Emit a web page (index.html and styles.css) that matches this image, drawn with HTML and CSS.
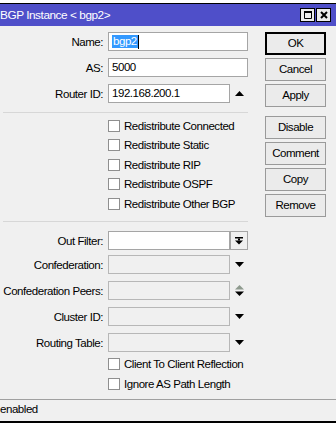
FILE: index.html
```html
<!DOCTYPE html>
<html lang="en">
<head>
  <meta charset="UTF-8" />
  <title>BGP Instance &lt; bgp2&gt;</title>
  <link rel="stylesheet" href="styles.css">
</head>
<body>

  <div class="window">
    <div class="titlebar">
      <span class="title">BGP Instance &lt; bgp2&gt;</span>
      <div class="title-btns">
        <span class="tbtn">
          <svg width="8" height="8" viewBox="0 0 8 8"><path d="M0.5 0.5H7.5V7.5H0.5Z" fill="none" stroke="#000"/><rect x="0" y="0" width="8" height="2"/></svg>
        </span>
        <span class="tbtn">
          <svg width="8" height="8" viewBox="0 0 8 8"><path d="M1 1L7 7M7 1L1 7" stroke="#000" stroke-width="2"/></svg>
        </span>
      </div>
    </div>

    <div class="content">
      <div class="form">
        <div class="row">
          <span class="label">Name:</span>
          <div class="input"><span class="selected">bgp2</span><span class="caret"></span></div>
        </div>
        <div class="row">
          <span class="label">AS:</span>
          <div class="input">5000</div>
        </div>
        <div class="row">
          <span class="label">Router ID:</span>
          <div class="input short">192.168.200.1</div>
          <span class="arrow">
            <svg width="9" height="5" viewBox="0 0 9 5"><path d="M0 5L4.5 0L9 5Z"/></svg>
          </span>
        </div>

        <div class="sep"></div>

        <div class="checks">
          <div class="check"><span class="box"></span>Redistribute Connected</div>
          <div class="check"><span class="box"></span>Redistribute Static</div>
          <div class="check"><span class="box"></span>Redistribute RIP</div>
          <div class="check"><span class="box"></span>Redistribute OSPF</div>
          <div class="check"><span class="box"></span>Redistribute Other BGP</div>
        </div>

        <div class="sep sep-low"></div>

        <div class="row first-low">
          <span class="label">Out Filter:</span>
          <div class="input short"></div>
          <span class="arrow arrow-btn">
            <svg width="8" height="8" viewBox="0 0 8 8"><rect x="0" y="0" width="8" height="1.5"/><rect x="3" y="1.5" width="2" height="2"/><path d="M0 3.5H8L4 7.5Z"/></svg>
          </span>
        </div>
        <div class="row">
          <span class="label">Confederation:</span>
          <div class="input short disabled"></div>
          <span class="arrow">
            <svg width="9" height="5" viewBox="0 0 9 5"><path d="M0 0H9L4.5 5Z"/></svg>
          </span>
        </div>
        <div class="row">
          <span class="label">Confederation Peers:</span>
          <div class="input short disabled"></div>
          <span class="arrow">
            <svg width="9" height="11" viewBox="0 0 9 11"><path d="M0 4.5L4.5 0L9 4.5Z" fill="#8e9a8e"/><path d="M0 6.5H9L4.5 11Z"/></svg>
          </span>
        </div>
        <div class="row">
          <span class="label">Cluster ID:</span>
          <div class="input short disabled"></div>
          <span class="arrow">
            <svg width="9" height="5" viewBox="0 0 9 5"><path d="M0 0H9L4.5 5Z"/></svg>
          </span>
        </div>
        <div class="row">
          <span class="label">Routing Table:</span>
          <div class="input short disabled"></div>
          <span class="arrow">
            <svg width="9" height="5" viewBox="0 0 9 5"><path d="M0 0H9L4.5 5Z"/></svg>
          </span>
        </div>

        <div class="checks checks-low">
          <div class="check"><span class="box"></span>Client To Client Reflection</div>
          <div class="check"><span class="box"></span>Ignore AS Path Length</div>
        </div>
      </div>

      <div class="actions">
        <div class="btn default">OK</div>
        <div class="btn">Cancel</div>
        <div class="btn">Apply</div>
        <div class="btn gap">Disable</div>
        <div class="btn">Comment</div>
        <div class="btn">Copy</div>
        <div class="btn">Remove</div>
      </div>
    </div>

    <div class="status">enabled</div>
  </div>

</body>
</html>
```

FILE: styles.css
```css
body {
  margin: 0;
  background: #fff;
  font-family: "Liberation Sans", Arial, sans-serif;
  font-size: 11.5px;
  letter-spacing: -0.45px;
  color: #000;
}
.window {
  margin-top: 3px;
  border-top: 1px solid #000;
  border-bottom: 2px solid #000;
  background: #f0f0f0;
}
.titlebar {
  height: 22px;
  background: #4f4fc9;
  color: #fff;
  display: flex;
  align-items: center;
  justify-content: space-between;
}
.title {
  font-size: 11.8px;
}
.title-btns {
  display: flex;
  gap: 1px;
  padding-right: 5px;
}
.tbtn {
  width: 15px;
  height: 14px;
  box-sizing: border-box;
  border: 1px solid #000;
  background: #ececec;
  display: flex;
  align-items: center;
  justify-content: center;
}
.content {
  display: flex;
  height: 373px;
  box-sizing: border-box;
  padding-top: 6px;
}
.form {
  width: 248px;
}
.row {
  display: flex;
  align-items: center;
  height: 19px;
  margin-bottom: 7px;
}
.label {
  width: 103px;
  margin-right: 5px;
  text-align: right;
  white-space: nowrap;
}
.input {
  width: 140px;
  height: 19px;
  box-sizing: border-box;
  border: 1px solid #a5a5a5;
  background: #fff;
  padding-left: 3px;
  line-height: 17px;
  display: flex;
  align-items: center;
}
.input.short {
  width: 122px;
}
.input.disabled {
  background: #f0f0f0;
  border-color: #b7b7b7;
}
.selected {
  background: #3399ff;
  color: #fff;
  line-height: 13px;
  padding: 0 1px;
}
.caret {
  width: 1px;
  height: 14px;
  background: #000;
}
.arrow {
  width: 18px;
  height: 19px;
  display: flex;
  align-items: center;
  justify-content: center;
}
.arrow-btn {
  box-sizing: border-box;
  border: 1px solid #a5a5a5;
  background: #f0f0f0;
}
.sep {
  height: 1px;
  margin: 9px 0 0 3px;
  background: #d7d7d7;
}
.sep-low {
  margin-top: 7.5px;
}
.checks {
  margin-top: 3px;
}
.check {
  display: flex;
  align-items: center;
  height: 19.5px;
  padding-left: 108px;
}
.box {
  width: 12px;
  height: 12px;
  box-sizing: border-box;
  border: 1px solid #8f8f8f;
  background: #fff;
  margin-right: 4px;
}
.first-low {
  margin-top: 9px;
  margin-bottom: 5px;
}
.checks-low {
  margin-top: -5px;
}
.checks-low .check {
  height: 20px;
}
.actions {
  width: 61px;
  margin-left: 17px;
  display: flex;
  flex-direction: column;
  gap: 3px;
}
.btn {
  height: 23px;
  box-sizing: border-box;
  border: 1px solid #9a9a9a;
  background: #ebebeb;
  text-align: center;
  line-height: 21px;
}
.btn.default {
  border-color: #000;
  box-shadow: inset 0 0 0 1px #000;
}
.btn.gap {
  margin-top: 6px;
}
.status {
  height: 21px;
  border-top: 1px solid #a0a0a0;
  line-height: 18px;
}
```
